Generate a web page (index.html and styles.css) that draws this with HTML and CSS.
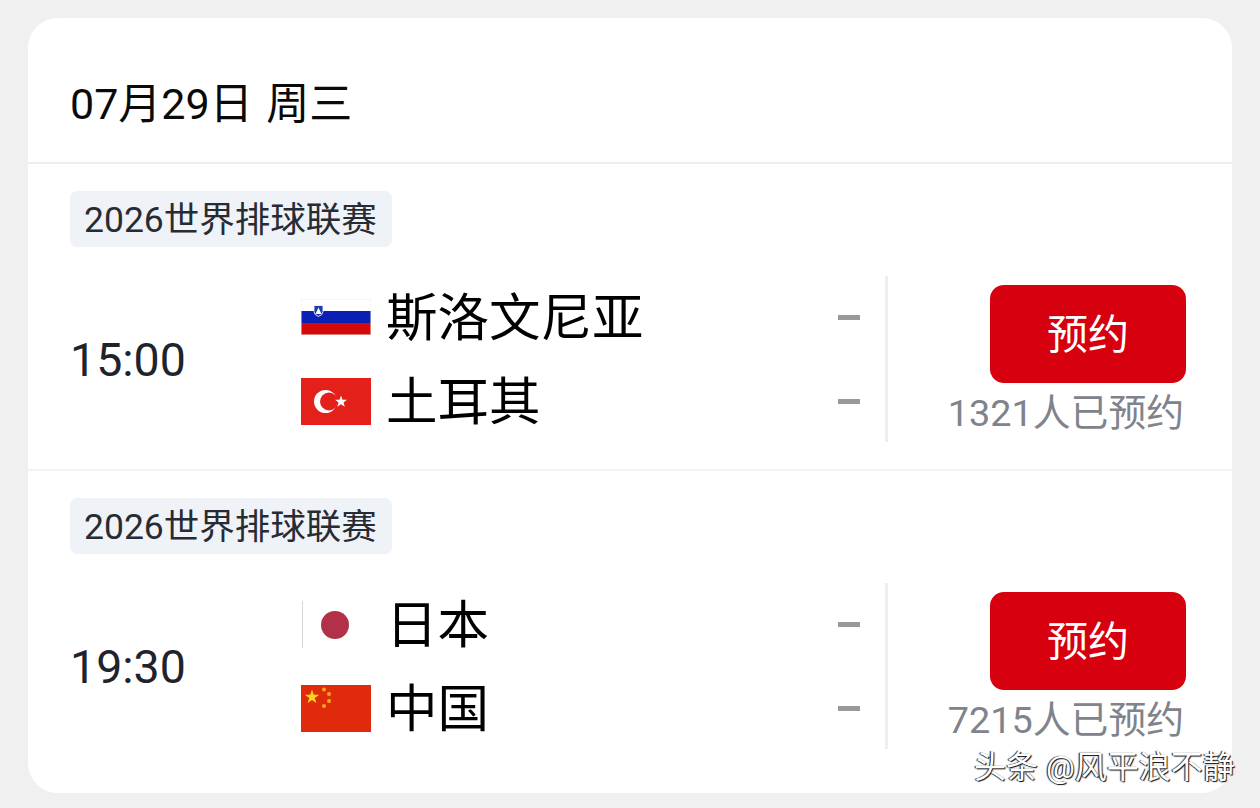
FILE: index.html
```html
<!DOCTYPE html>
<html lang="zh-CN">
<head>
  <meta charset="UTF-8" />
  <meta name="viewport" content="width=device-width, initial-scale=1.0" />
  <title>赛程</title>
  <link rel="stylesheet" href="styles.css">
</head>
<body>
  <div class="card">
    <div class="date">07月29日 周三</div>

    <div class="match">
      <span class="tag">2026世界排球联赛</span>
      <div class="match-body">
        <div class="time">15:00</div>
        <div class="teams">
          <div class="team">
            <svg class="flag" viewBox="0 0 70 36">
              <rect width="70" height="12" fill="#fff"/>
              <rect y="12" width="70" height="12" fill="#0a1fb4"/>
              <rect y="24" width="70" height="12" fill="#d40a0a"/>
              <rect width="70" height="36" fill="none" stroke="#eee" stroke-width="1"/>
              <path d="M13 6.500h9v6q0 3.500-4.500 5q-4.500-1.500-4.500-5z" fill="#1c3fae" stroke="#fff" stroke-width="0.800"/>
              <path d="M17.500 8.500l3 6.500h-6z" fill="#fff"/>
            </svg>
            <span class="name">斯洛文尼亚</span>
            <span class="score"></span>
          </div>
          <div class="team">
            <svg class="flag flag-tall" viewBox="0 0 70 47">
              <rect width="70" height="47" fill="#e4201a"/>
              <circle cx="24.500" cy="23.500" r="11.500" fill="#fff"/>
              <circle cx="28" cy="23.500" r="9" fill="#e4201a"/>
              <path d="M40 17.500l1.600 4.200 4.400.1-3.500 2.700 1.300 4.300-3.800-2.500-3.700 2.500 1.300-4.300-3.500-2.700 4.400-.1z" fill="#fff"/>
            </svg>
            <span class="name">土耳其</span>
            <span class="score"></span>
          </div>
        </div>
        <div class="action">
          <button class="btn">预约</button>
          <div class="count">1321人已预约</div>
        </div>
      </div>
    </div>

    <div class="match">
      <span class="tag">2026世界排球联赛</span>
      <div class="match-body">
        <div class="time">19:30</div>
        <div class="teams">
          <div class="team">
            <svg class="flag flag-tall" viewBox="0 0 70 47">
              <rect x="1" width="1" height="47" fill="#d8d8d8"/>
              <circle cx="34" cy="24" r="14" fill="#b23048"/>
            </svg>
            <span class="name">日本</span>
            <span class="score"></span>
          </div>
          <div class="team">
            <svg class="flag flag-tall" viewBox="0 0 70 47">
              <rect width="70" height="47" fill="#e02a0c"/>
              <path d="M11 4.500l1.700 5.300h5.500l-4.500 3.200 1.800 5.300-4.500-3.300-4.500 3.300 1.800-5.300-4.500-3.200h5.500z" fill="#fbd716"/>
              <circle cx="23" cy="4.500" r="2" fill="#f6a81a"/>
              <circle cx="28" cy="9" r="2" fill="#f6a81a"/>
              <circle cx="28" cy="16" r="2" fill="#f6a81a"/>
              <circle cx="23" cy="21" r="2" fill="#f6a81a"/>
            </svg>
            <span class="name">中国</span>
            <span class="score"></span>
          </div>
        </div>
        <div class="action">
          <button class="btn">预约</button>
          <div class="count">7215人已预约</div>
        </div>
      </div>
    </div>
  </div>

  <div class="watermark">头条 @风平浪不静</div>
</body>
</html>
```

FILE: styles.css
```css
*{box-sizing:border-box;margin:0;padding:0}
html,body{height:808px;overflow:hidden}
body{font-family:Roboto,'Noto Sans CJK SC',sans-serif;background:#f0f0f0;color:#000;padding:18px 28px 15px;position:relative}

.card{background:#fff;border-radius:30px;height:775px;overflow:hidden}
.date{height:146px;padding:57px 42px 29px;display:flex;align-items:center;font-size:43px;line-height:1;word-spacing:3px;color:#0a0a0a;border-bottom:2px solid #eeeeee}

.match{padding:27px 46px 27px 42px;border-bottom:2px solid #f3f3f3}
.match:last-child{border-bottom:none}
.tag{display:inline-block;height:56px;line-height:59px;padding:0 14px 0 14px;min-width:322px;background:#eff2f6;border-radius:7px;font-size:35.500px;color:#272b33;vertical-align:top}

.match-body{display:flex;align-items:stretch;height:166px;margin-top:29px}
.time{width:231px;padding-top:1px;font-size:46.500px;color:#1f232b;display:flex;align-items:center}
.teams{flex:1;display:flex;flex-direction:column;justify-content:center;gap:37px;border-right:3px solid #eceef3;padding-right:25px}
.team{display:flex;align-items:center;height:47px}
.flag{width:70px;height:36px;flex:none}
.flag-tall{height:47px}
.name{font-size:51.500px;line-height:1;margin-left:15px;padding-top:4px;color:#000}
.score{width:22px;height:5px;background:#999;margin-left:auto}

.action{width:298px;display:flex;flex-direction:column;align-items:flex-end}
.btn{width:196px;height:98px;margin-top:9px;padding-bottom:6px;border:none;border-radius:14px;background:#d7000f;color:#fff;font-family:inherit;font-size:41px}
.count{font-size:37.800px;line-height:1;color:#7f838b;margin-top:12px;margin-right:2px}

.watermark{position:absolute;left:974px;top:749px;font-size:32px;line-height:36px;white-space:nowrap;color:#fff;text-shadow:-1px 0 1px #111,1px 1px 1px #111}
```
